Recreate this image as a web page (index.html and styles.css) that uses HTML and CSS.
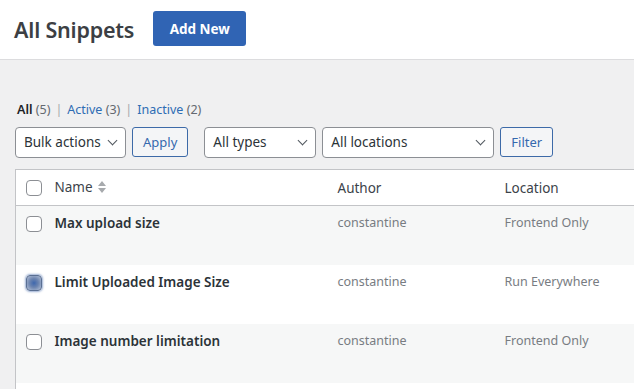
FILE: index.html
```html
<!DOCTYPE html>
<html>
<head>
<meta charset="utf-8">
<link rel="stylesheet" href="styles.css">
</head>
<body>
<header class="top">
  <h1 class="title">All Snippets</h1>
  <a class="btn-primary">Add New</a>
</header>
<main class="content">
  <ul class="views">
    <li><strong>All</strong> <span class="count">(5)</span></li>
    <li class="sep">|</li>
    <li><a>Active</a> <span class="count">(3)</span></li>
    <li class="sep">|</li>
    <li><a>Inactive</a> <span class="count">(2)</span></li>
  </ul>
  <div class="controls">
    <div class="select w-bulk">Bulk actions <span class="chev"></span></div>
    <button class="btn-sec">Apply</button>
    <div class="select w-types gap-l">All types <span class="chev"></span></div>
    <div class="select w-loc">All locations <span class="chev"></span></div>
    <button class="btn-sec">Filter</button>
  </div>
  <table class="list">
    <thead>
      <tr>
        <th class="cb"><span class="box"></span></th>
        <th class="c-name">Name <span class="sort"><svg width="8" height="14" viewBox="0 0 8 14"><path d="M4 1 L8 6 H0 Z M0 8 H8 L4 13 Z" fill="#a7aaad"/></svg></span></th>
        <th class="c-author">Author</th>
        <th class="c-loc">Location</th>
      </tr>
    </thead>
    <tbody>
      <tr class="alt">
        <td class="cb"><span class="box"></span></td>
        <td class="c-name"><strong>Max upload size</strong></td>
        <td class="c-author">constantine</td>
        <td class="c-loc">Frontend Only</td>
      </tr>
      <tr>
        <td class="cb"><span class="box focused"></span></td>
        <td class="c-name"><strong>Limit Uploaded Image Size</strong></td>
        <td class="c-author">constantine</td>
        <td class="c-loc">Run Everywhere</td>
      </tr>
      <tr class="alt">
        <td class="cb"><span class="box"></span></td>
        <td class="c-name"><strong>Image number limitation</strong></td>
        <td class="c-author">constantine</td>
        <td class="c-loc">Frontend Only</td>
      </tr>
      <tr>
        <td class="cb"></td>
        <td class="c-name"></td>
        <td class="c-author"></td>
        <td class="c-loc"></td>
      </tr>
    </tbody>
  </table>
</main>
</body>
</html>
```

FILE: styles.css
```css
* { box-sizing: border-box; }
html, body { margin: 0; padding: 0; }
body {
  background: #f0f0f1;
  font-family: "Noto Sans", "Open Sans", sans-serif;
  color: #3c434a;
  width: 634px;
  height: 389px;
  overflow: hidden;
}
.top {
  background: #fff;
  height: 60px;
  border-bottom: 1px solid #dcdcde;
  display: flex;
  align-items: center;
  padding: 0 14px;
  gap: 19px;
}
.title {
  margin: 0;
  font-size: 21.5px;
  font-weight: 600;
  color: #3c3f44;
  letter-spacing: -0.2px;
}
.btn-primary {
  background: #3064b4;
  color: #fff;
  font-weight: 700;
  font-size: 13.5px;
  height: 35px;
  width: 93px;
  display: flex;
  align-items: center;
  justify-content: center;
  border-radius: 3px;
  margin-top: -2px;
}
.content { padding: 0 0 0 15px; }
.views {
  list-style: none;
  margin: 0;
  padding: 41px 0 0 2px;
  display: flex;
  gap: 5px;
  font-size: 12.5px;
  line-height: 18px;
  height: 67px;
}
.views strong { color: #1d2327; font-weight: 600; }
.views a { color: #2e6cb4; }
.count { color: #646970; }
.sep { color: #a7aaad; }
.controls {
  display: flex;
  align-items: center;
  gap: 6px;
  height: 30px;
}
.select {
  height: 31px;
  border: 1px solid #8c8f94;
  border-radius: 4px;
  background: #fff;
  font-size: 13.5px;
  color: #2c3338;
  display: flex;
  align-items: center;
  padding: 0 8px;
  position: relative;
}
.chev {
  position: absolute;
  right: 9px;
  top: 9px;
  width: 7px;
  height: 7px;
  border-right: 1.5px solid #50575e;
  border-bottom: 1.5px solid #50575e;
  transform: rotate(45deg);
}
.w-bulk { width: 111px; }
.w-types { width: 112px; }
.w-loc { width: 172px; }
.gap-l { margin-left: 10px; }
.btn-sec {
  height: 30px;
  border: 1px solid #3d6aa8;
  border-radius: 3px;
  background: #f4f5f7;
  color: #3569ae;
  font-family: inherit;
  font-size: 13px;
  padding: 0 10px;
}
.list {
  margin-top: 12px;
  border-collapse: collapse;
  width: 700px;
  border: 1px solid #c3c4c7;
  background: #fff;
  font-size: 12.5px;
}
.list th {
  text-align: left;
  font-weight: 400;
  font-size: 13.5px;
  color: #3c434a;
  height: 36px;
  border-bottom: 1px solid #c3c4c7;
  vertical-align: middle;
}
.list td {
  height: 59px;
  vertical-align: top;
  padding-top: 8px;
  color: #787c82;
}
.list tr.alt td { background: #f6f7f7; }
.cb { width: 38px; padding-left: 10px; }
.list td.cb { padding-top: 10px; }
.c-name { width: 283px; }
.c-author { width: 167px; }
.list td.c-name strong { color: #2c3338; font-weight: 600; font-size: 13.5px; }
.box {
  display: block;
  width: 16px;
  height: 16px;
  border: 1px solid #8c8f94;
  border-radius: 4px;
  background: #fff;
}
.box.focused {
  border-color: #5a6f92;
  background: radial-gradient(circle, #3e67ad 0, #6d85b0 45%, #b7c3d8 100%);
  box-shadow: 0 0 2px 1px rgba(60, 100, 170, 0.5);
}
.sort { display: inline-block; vertical-align: -2px; margin-left: 2px; }
```
